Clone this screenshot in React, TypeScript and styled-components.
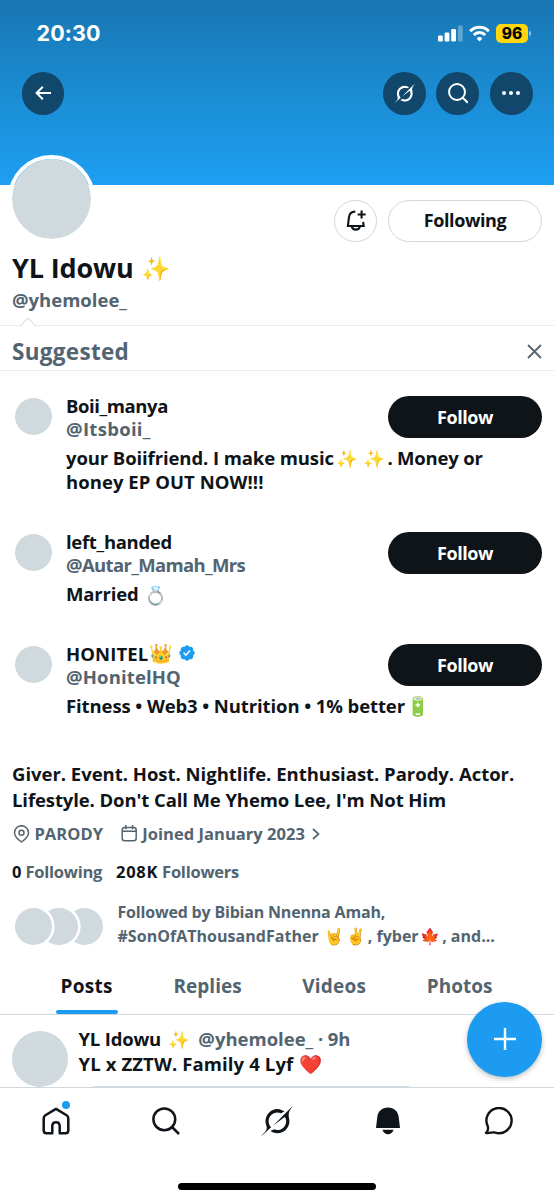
import React from "react";
import styled, { createGlobalStyle } from "styled-components";

const ink = "#0f1419";
const muted = "#536471";
const blue = "#1d9bf0";
const placeholder = "#cfd9de";

const GlobalStyle = createGlobalStyle`
  * { box-sizing: border-box; }
  body {
    margin: 0;
    background: #fff;
    color: ${ink};
    font-family: "Open Sans", "Noto Sans", sans-serif;
    font-size: 18.5px;
    font-weight: 700;
  }
  svg { display: block; flex: none; }
  button { font: inherit; padding: 0; border: 0; cursor: pointer; }
`;

const Screen = styled.div`
  position: relative;
  width: 554px;
  height: 1200px;
  overflow: hidden;
  display: flex;
  flex-direction: column;
`;

const Text = styled.span<{ $size?: number; $track?: number; $color?: string }>`
  font-size: ${p => p.$size ?? 18.5}px;
  letter-spacing: ${p => p.$track ?? 0}px;
  color: ${p => p.$color ?? "inherit"};
  white-space: pre;
`;

const Emoji = styled.span<{ $size: number; $box: number; $gap?: number; $drop?: number }>`
  display: inline-flex;
  justify-content: center;
  align-items: center;
  width: ${p => p.$box}px;
  height: 1em;
  margin-left: ${p => p.$gap ?? 0}px;
  font-family: "Noto Color Emoji", "Noto Sans", sans-serif;
  font-size: ${p => p.$size}px;
  font-weight: 400;
  line-height: 1;
  letter-spacing: 0;
  vertical-align: ${p => -(p.$drop ?? 0)}px;
  white-space: nowrap;
`;

const Banner = styled.header`
  height: 184.5px;
  flex: none;
  background: linear-gradient(#1876b2, #1a87cb 38%, #1d9ff3);
  color: #fff;
`;

const StatusBar = styled.div`
  height: 72px;
  padding: 0 23px 6px 36.5px;
  display: flex;
  align-items: center;
  justify-content: space-between;
`;

const Clock = styled.time`
  font: 700 21.5px/26px Inter, sans-serif;
  letter-spacing: 0.1px;
`;

const StatusIcons = styled.div`
  display: flex;
  align-items: center;
  gap: 6px;
`;

const Battery = styled.div`
  display: flex;
  align-items: center;
  gap: 1px;
  &::after {
    content: "";
    width: 2px;
    height: 5px;
    border-radius: 0 2px 2px 0;
    background: #8bbfe3;
  }
`;

const BatteryLevel = styled.span`
  width: 32px;
  height: 19px;
  border-radius: 5px;
  background: #fdd70c;
  color: #000;
  font: 800 15.5px/19px Inter, sans-serif;
  text-align: center;
`;

const Toolbar = styled.nav`
  display: flex;
  gap: 10.7px;
  padding: 0 21.5px;
`;

const RoundButton = styled.button`
  width: 42.7px;
  height: 42.7px;
  border-radius: 50%;
  background: #10476b;
  color: #fff;
  display: grid;
  place-items: center;
  &:first-child { margin-right: auto; }
`;

const ProfileHead = styled.section`
  height: 140px;
  flex: none;
  padding: 0 12px;
`;

const ProfileActions = styled.div`
  height: 65px;
  display: flex;
  gap: 11px;
  align-items: flex-start;
  padding-top: 15.2px;
`;

const ProfileAvatar = styled.div`
  position: relative;
  width: 87.6px;
  height: 87.6px;
  margin: -44.7px auto 0 -4.5px;
  border: 4.5px solid #fff;
  border-radius: 50%;
  background: ${placeholder};
  background-clip: padding-box;
`;

const Outline = styled.button<{ $width: number }>`
  width: ${p => p.$width}px;
  height: 42.6px;
  padding-bottom: 1px;
  border: 1.3px solid ${placeholder};
  border-radius: 22px;
  background: #fff;
  color: ${ink};
  display: grid;
  place-items: center;
`;

const DisplayName = styled.h1`
  margin: 0;
  font-size: inherit;
  line-height: 36px;
  height: 36.5px;
`;

const Handle = styled.div`
  line-height: 27px;
  color: ${muted};
`;

const SuggestedHead = styled.div`
  position: relative;
  height: 46.5px;
  flex: none;
  display: flex;
  align-items: center;
  justify-content: space-between;
  padding: 7px 12px 0;
  border: solid #eaecee;
  border-width: 1.5px 0;
  color: ${muted};
`;

const Notch = styled.svg`
  position: absolute;
  left: 19px;
  top: -9px;
`;

const Suggestions = styled.section`
  flex: none;
  padding-top: 23px;
`;

const Suggestion = styled.article`
  display: grid;
  grid-template-columns: 51px 1fr 154px;
  padding: 0 12px 36.2px 15px;
`;

const Avatar = styled.div<{ $size: number }>`
  width: ${p => p.$size}px;
  height: ${p => p.$size}px;
  flex: none;
  border-radius: 50%;
  background: ${placeholder};
`;

const SuggestionAvatar = styled(Avatar)`
  margin-top: 3.7px;
`;

const NameLine = styled.div`
  height: 23px;
  line-height: 23px;
  display: flex;
  align-items: center;
`;

const Verified = styled.svg`
  margin-left: 4px;
`;

const FollowButton = styled.button`
  height: 42.4px;
  margin-top: 2px;
  padding-bottom: 2px;
  border-radius: 22px;
  background: ${ink};
  color: #fff;
`;

const Blurb = styled.p`
  grid-column: 2 / 4;
  margin: 5.8px 0 0;
  line-height: 24px;
`;

const BlurbLine = styled.span`
  display: block;
  height: 24px;
  white-space: nowrap;
`;

const Bio = styled.p`
  margin: 7px 12px 0;
  flex: none;
  line-height: 26px;
`;

const BioLine = styled.span`
  display: block;
  height: 26px;
`;

const MetaRow = styled.div`
  display: flex;
  align-items: center;
  height: 24px;
  flex: none;
  line-height: 24px;
  margin: 9px 13px 0;
  color: ${muted};
`;

const JoinedIcon = styled.svg`
  margin: 0 4px 0 18px;
`;

const MoreIcon = styled.svg`
  margin-left: 7px;
`;

const Counts = styled.div`
  display: flex;
  flex: none;
  height: 24px;
  line-height: 24px;
  margin: 14.5px 12px 0;
  font-size: 16.5px;
  color: ${muted};
`;

const Count = styled.div<{ $width: number }>`
  width: ${p => p.$width}px;
  white-space: nowrap;
`;

const FollowedBy = styled.div`
  display: flex;
  flex: none;
  height: 48px;
  margin: 15.3px 12px 0 15px;
  color: ${muted};
  font-size: 16px;
  line-height: 24px;
`;

const AvatarStack = styled.div`
  width: 102.5px;
  display: flex;
  flex-direction: row-reverse;
  justify-content: flex-end;
  padding-top: 8px;
`;

const StackedAvatar = styled(Avatar)`
  position: relative;
  box-shadow: 0 0 0 2.6px #fff;
  &:not(:last-child) { margin-left: -12px; }
`;

const Tabs = styled.nav`
  display: flex;
  justify-content: space-between;
  height: 67.5px;
  flex: none;
  padding: 25px 61.500px 0 60.500px;
  border-bottom: 1px solid ${placeholder};
  color: ${muted};
  line-height: 26px;
`;

const Tab = styled.a<{ $active?: boolean }>`
  position: relative;
  color: ${p => (p.$active ? ink : muted)};
  &::after {
    content: "";
    position: absolute;
    left: -5px;
    right: -5px;
    bottom: 0;
    height: 4px;
    border-radius: 2px;
    background: ${p => (p.$active ? blue : "transparent")};
  }
`;

const Post = styled.article`
  display: flex;
  gap: 10.5px;
  height: 72px;
  flex: none;
  padding: 12px 12px 0;
  overflow: hidden;
`;

const PostAvatar = styled(Avatar)`
  margin-top: 4px;
`;

const PostLine = styled.div`
  height: 24.5px;
  line-height: 24.5px;
  white-space: nowrap;
`;

const PostMedia = styled.div`
  width: 345px;
  height: 60px;
  margin-top: 10px;
  border-radius: 18px;
  background: ${placeholder};
`;

const BottomBar = styled.nav`
  position: relative;
  flex: 1;
  border-top: 1px solid ${placeholder};
  background: #fff;
  display: flex;
  justify-content: space-between;
  padding: 16.6px 39.500px 0 39.500px;
`;

const BarItem = styled.a`
  position: relative;
  width: 32px;
  height: 32px;
  display: grid;
  place-items: center;
`;

const UnreadDot = styled.span`
  position: absolute;
  left: 22px;
  top: -4px;
  width: 8px;
  height: 8px;
  border-radius: 50%;
  background: ${blue};
`;

const HomeIndicator = styled.div`
  position: absolute;
  left: 178px;
  bottom: 10px;
  width: 198px;
  height: 7px;
  border-radius: 4px;
  background: #000;
`;

const ComposeButton = styled.button`
  position: absolute;
  left: 467px;
  top: 1001.7px;
  width: 75px;
  height: 75px;
  border-radius: 50%;
  background: ${blue};
  box-shadow: 0 2px 5px rgba(15, 20, 25, 0.28);
  display: grid;
  place-items: center;
`;

const GrokIcon = ({ size }: { size: number }) => (
  <svg width={size} height={size} viewBox="0 0 24 24" fill="currentColor">
    <path d="M9.27 15.29l7.978-5.897c.391-.29.95-.177 1.137.272.98 2.369.542 5.215-1.41 7.169-1.951 1.954-4.667 2.382-7.149 1.406l-2.711 1.257c3.889 2.661 8.611 2.003 11.562-.953 2.341-2.344 3.066-5.539 2.388-8.42l.006.007c-.983-4.232.242-5.924 2.75-9.383.06-.082.12-.164.179-.248l-3.301 3.305v-.01L9.267 15.292M7.623 16.723c-2.792-2.67-2.31-6.801.071-9.184 1.761-1.763 4.647-2.483 7.166-1.425l2.705-1.25a7.808 7.808 0 00-1.829-1A8.975 8.975 0 005.984 5.83c-2.533 2.536-3.33 6.436-1.962 9.764 1.022 2.487-.653 4.246-2.34 6.022-.599.63-1.199 1.259-1.682 1.925l7.62-6.815" />
  </svg>
);

const SearchIcon = ({ size, stroke }: { size: number; stroke: number }) => (
  <svg width={size} height={size} viewBox="0 0 28 28" fill="none" stroke="currentColor" strokeWidth={stroke}>
    <circle cx="12.3" cy="12.3" r="10.9" />
    <path d="M20 20l7 7" />
  </svg>
);

const VerifiedIcon = () => (
  <Verified width="18" height="18" viewBox="0 0 22 22">
    <path
      fill={blue}
      d="M20.396 11c-.018-.646-.215-1.275-.57-1.816-.354-.54-.852-.972-1.438-1.246.223-.607.27-1.264.14-1.897-.131-.634-.437-1.218-.882-1.687-.47-.445-1.053-.75-1.687-.882-.633-.13-1.29-.083-1.897.14-.273-.587-.704-1.086-1.245-1.44S11.647 1.62 11 1.604c-.646.017-1.273.213-1.813.568s-.969.854-1.24 1.44c-.608-.223-1.267-.272-1.902-.14-.635.13-1.22.436-1.69.882-.445.47-.749 1.055-.878 1.688-.13.633-.08 1.29.144 1.896-.587.274-1.087.705-1.443 1.245-.356.54-.555 1.17-.574 1.817.02.647.218 1.276.574 1.817.356.54.856.972 1.443 1.245-.224.606-.274 1.263-.144 1.896.13.634.433 1.218.877 1.688.47.443 1.054.747 1.687.878.633.132 1.29.084 1.897-.136.274.586.705 1.084 1.246 1.439.54.354 1.17.551 1.816.569.647-.016 1.276-.213 1.817-.567s.972-.854 1.245-1.44c.604.239 1.266.296 1.903.164.636-.132 1.22-.447 1.68-.907.46-.46.776-1.044.908-1.681s.075-1.299-.165-1.903c.586-.274 1.084-.705 1.439-1.246.354-.54.551-1.17.569-1.816z"
    />
    <path fill="#fff" d="M9.662 14.85l-3.429-3.428 1.293-1.302 2.072 2.072 4.4-4.794 1.347 1.246z" />
  </Verified>
);

const people = [
  {
    name: "Boii_manya", nameTrack: -0.4, handle: "@Itsboii_", handleTrack: 0.3,
    blurb: (
      <>
        <BlurbLine>
          <Text $track={-0.1}>your Boiifriend. I make music</Text>
          <Emoji $size={17.5} $box={26.5}>✨</Emoji>
          <Emoji $size={17.5} $box={27}>✨</Emoji>
          <Text $track={-0.2}>. Money or</Text>
        </BlurbLine>
        <BlurbLine><Text $track={0.05}>honey EP OUT NOW!!!</Text></BlurbLine>
      </>
    ),
  },
  {
    name: "left_handed", nameTrack: -0.3, handle: "@Autar_Mamah_Mrs", handleTrack: -0.65,
    blurb: (
      <BlurbLine>
        <Text $track={-0.15}>Married</Text>
        <Emoji $size={18.5} $box={24} $gap={5} $drop={1}>💍</Emoji>
      </BlurbLine>
    ),
  },
  {
    name: "HONITEL", nameTrack: 0.1, handle: "@HonitelHQ", handleTrack: 0.15, verified: true,
    blurb: (
      <BlurbLine>
        <Text $track={-0.1}>Fitness • Web3 • Nutrition • 1% better</Text>
        <Emoji $size={19} $box={25} $gap={1}>🔋</Emoji>
      </BlurbLine>
    ),
  },
];

export default function App() {
  return (
    <Screen>
      <GlobalStyle />
      <Banner>
        <StatusBar>
          <Clock>20:30</Clock>
          <StatusIcons>
            <svg width="25" height="17" viewBox="0 0 25 17" fill="#fff">
              <rect x="0" y="10.5" width="4.8" height="6" rx="1.3" />
              <rect x="6.6" y="7.5" width="4.8" height="9" rx="1.3" />
              <rect x="13.2" y="4" width="4.8" height="12.5" rx="1.3" />
              <rect x="19.9" y="0.5" width="4.8" height="16" rx="1.3" opacity="0.3" />
            </svg>
            <svg width="21" height="17" viewBox="0 0 21 17" fill="none" stroke="#fff" strokeWidth="3">
              <path d="M1.2 6.2a13.2 13.2 0 0 1 18.6 0" />
              <path d="M4.8 10a8 8 0 0 1 11.4 0" />
              <path d="M10.5 16.4l-2.9-3a4.1 4.1 0 0 1 5.8 0z" fill="#fff" stroke="none" />
            </svg>
            <Battery><BatteryLevel>96</BatteryLevel></Battery>
          </StatusIcons>
        </StatusBar>
        <Toolbar>
          <RoundButton aria-label="Back">
            <svg width="16" height="14" viewBox="0 0 16 14" fill="none" stroke="#fff" strokeWidth="2">
              <path d="M16 7H1.5M7.8 0.8L1.6 7l6.2 6.2" />
            </svg>
          </RoundButton>
          <RoundButton aria-label="Grok"><GrokIcon size={21} /></RoundButton>
          <RoundButton aria-label="Search"><SearchIcon size={20.5} stroke={2.7} /></RoundButton>
          <RoundButton aria-label="More">
            <svg width="18" height="4" viewBox="0 0 18 4" fill="#fff">
              <circle cx="2" cy="2" r="2" /><circle cx="9" cy="2" r="2" /><circle cx="16" cy="2" r="2" />
            </svg>
          </RoundButton>
        </Toolbar>
      </Banner>

      <ProfileHead>
        <ProfileActions>
          <ProfileAvatar />
          <Outline $width={42.6} aria-label="Notify">
            <svg width="20" height="21" viewBox="0 0 20 21" fill="none" stroke={ink} strokeWidth="2.1">
              <path d="M9.3 1.6C5.6 1.6 3.2 4 2.9 7.6L1.9 16H17.7L17.1 12" />
              <path d="M5.6 16.2c.5 2 2.1 3.4 4.2 3.4s3.7-1.4 4.2-3.4" />
              <path d="M15.6 0.5v8M11.6 4.5h8" />
            </svg>
          </Outline>
          <Outline $width={154}><Text $size={18} $track={-0.4}>Following</Text></Outline>
        </ProfileActions>
        <DisplayName>
          <Text $size={27} $track={-0.15}>YL Idowu</Text>
          <Emoji $size={23.5} $box={30} $gap={7.5} $drop={-1}>✨</Emoji>
        </DisplayName>
        <Handle><Text>@yhemolee_</Text></Handle>
      </ProfileHead>

      <SuggestedHead>
        <Notch width="18" height="10" viewBox="0 0 18 10" fill="#fff" stroke="#dfe2e5" strokeWidth="1.2">
          <path d="M1 9L9 1l8 8" />
        </Notch>
        <Text $size={22.5} $track={0.3}>Suggested</Text>
        <svg width="15" height="15" viewBox="0 0 15 15" fill="none" stroke={muted} strokeWidth="1.8">
          <path d="M1 1l13 13M14 1L1 14" />
        </svg>
      </SuggestedHead>

      <Suggestions>
        {people.map(p => (
          <Suggestion key={p.name}>
            <SuggestionAvatar $size={37.4} />
            <div>
              <NameLine>
                <Text $track={p.nameTrack}>{p.name}</Text>
                {p.verified && (
                  <>
                    <Emoji $size={19} $box={26}>👑</Emoji>
                    <VerifiedIcon />
                  </>
                )}
              </NameLine>
              <NameLine><Text $track={p.handleTrack} $color={muted}>{p.handle}</Text></NameLine>
            </div>
            <FollowButton><Text $size={18} $track={-0.4}>Follow</Text></FollowButton>
            <Blurb>{p.blurb}</Blurb>
          </Suggestion>
        ))}
      </Suggestions>

      <Bio>
        <BioLine><Text $track={-0.02}>Giver. Event. Host. Nightlife. Enthusiast. Parody. Actor.</Text></BioLine>
        <BioLine><Text $track={-0.1}>Lifestyle. Don't Call Me Yhemo Lee, I'm Not Him</Text></BioLine>
      </Bio>

      <MetaRow>
        <svg width="17" height="18" viewBox="0 0 17 18" fill="none" stroke={muted} strokeWidth="1.5">
          <path d="M8.5 17C5 14.5 1.5 11.5 1.5 7.7a7 7 0 0 1 14 0c0 3.8-3.5 6.8-7 9.3z" />
          <circle cx="8.5" cy="7.7" r="2.5" />
        </svg>
        <Text $size={16.5} $track={0.1}>{" PARODY"}</Text>
        <JoinedIcon width="17" height="17" viewBox="0 0 17 17" fill="none" stroke={muted} strokeWidth="1.5">
          <rect x="1.2" y="2.4" width="14" height="13.4" rx="2.5" />
          <path d="M1.2 6.2h14M4.8 0v4.3M11.6 0v4.3" />
        </JoinedIcon>
        <Text $size={16.5} $track={0.03}>Joined January 2023</Text>
        <MoreIcon width="8" height="12" viewBox="0 0 8 12" fill="none" stroke={muted} strokeWidth="1.7">
          <path d="M1 1l5.5 5L1 11" />
        </MoreIcon>
      </MetaRow>

      <Counts>
        <Count $width={104}>
          <Text $size={16.5} $color={ink}>0</Text>
          <Text $size={16.5} $track={-0.25}>{" Following"}</Text>
        </Count>
        <Count $width={140}>
          <Text $size={16.5} $track={0.7} $color={ink}>208K</Text>
          <Text $size={16.5} $track={-0.25}>{" Followers"}</Text>
        </Count>
      </Counts>

      <FollowedBy>
        <AvatarStack>
          <StackedAvatar $size={37.4} />
          <StackedAvatar $size={37.4} />
          <StackedAvatar $size={37.4} />
        </AvatarStack>
        <div>
          <BlurbLine><Text $size={16} $track={-0.19}>Followed by Bibian Nnenna Amah,</Text></BlurbLine>
          <BlurbLine>
            <Text $size={16} $track={0.03}>#SonOfAThousandFather</Text>
            <Emoji $size={16} $box={22} $gap={4.5}>🤘</Emoji>
            <Emoji $size={16} $box={22.5}>✌️</Emoji>
            <Text $size={16}>, fyber</Text>
            <Emoji $size={16} $box={23.5}>🍁</Emoji>
            <Text $size={16}>, and...</Text>
          </BlurbLine>
        </div>
      </FollowedBy>

      <Tabs>
        <Tab $active><Text $size={19} $track={0.3}>Posts</Text></Tab>
        <Tab><Text $size={19}>Replies</Text></Tab>
        <Tab><Text $size={19} $track={0.2}>Videos</Text></Tab>
        <Tab><Text $size={19}>Photos</Text></Tab>
      </Tabs>

      <Post>
        <PostAvatar $size={56} />
        <div>
          <PostLine>
            <Text $track={-0.2}>YL Idowu</Text>
            <Emoji $size={17.5} $box={28} $gap={4.5}>✨</Emoji>
            <Text $color={muted}>{" @yhemolee_"}</Text>
            <Text $color={muted} $track={-0.1}>{" · 9h"}</Text>
          </PostLine>
          <PostLine>
            <Text $track={0.12}>YL x ZZTW. Family 4 Lyf</Text>
            <Emoji $size={18.5} $box={25} $gap={5}>❤️</Emoji>
          </PostLine>
          <PostMedia />
        </div>
      </Post>

      <BottomBar>
        <BarItem aria-label="Home">
          <svg width="28" height="28" viewBox="0 0 28 28" fill="none" stroke={ink} strokeWidth="2.5">
            <path d="M14 1.9L24.6 8.3c1.1.7 1.7 1.6 1.7 2.9v12.3c0 1.6-1.1 2.7-2.7 2.7H17.7v-7c0-2.4-1.5-3.9-3.7-3.9s-3.7 1.5-3.7 3.9v7H4.4c-1.6 0-2.7-1.1-2.7-2.7V11.2c0-1.3.6-2.2 1.7-2.9z" strokeLinejoin="round" />
          </svg>
          <UnreadDot />
        </BarItem>
        <BarItem aria-label="Search"><SearchIcon size={28} stroke={2.5} /></BarItem>
        <BarItem aria-label="Grok"><GrokIcon size={32} /></BarItem>
        <BarItem aria-label="Notifications">
          <svg width="24" height="28" viewBox="0 0 24 28" fill={ink}>
            <path d="M12 .5c6 0 10.2 4 10.7 9.5L24 21H0L1.3 10C1.8 4.5 6 .5 12 .5z" />
            <path d="M6.5 22.8h11c-.8 2.8-2.8 4.5-5.5 4.5s-4.7-1.7-5.5-4.5z" />
          </svg>
        </BarItem>
        <BarItem aria-label="Messages">
          <svg width="29" height="28" viewBox="0 0 29 28" fill="none" stroke={ink} strokeWidth="2.4" strokeLinejoin="round">
            <path d="M2 25.8c2-1.7 2.6-3.8 1.7-6.7A12.6 12.6 0 1 1 11.2 25.6c-3.2-1-5.2 1.2-9.2.2z" />
          </svg>
        </BarItem>
        <HomeIndicator />
      </BottomBar>

      <ComposeButton aria-label="Compose">
        <svg width="22" height="22" viewBox="0 0 22 22" stroke="#fff" strokeWidth="2.4">
          <path d="M11 0v22M0 11h22" />
        </svg>
      </ComposeButton>
    </Screen>
  );
}
